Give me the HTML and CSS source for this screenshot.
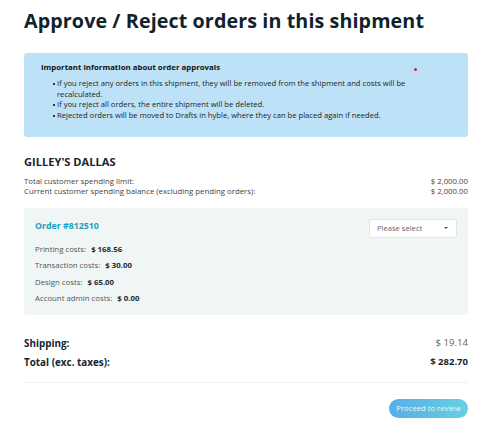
FILE: index.html
```html
<!DOCTYPE html>
<html>
<head>
<meta charset="utf-8">
<link rel="stylesheet" href="styles.css">
</head>
<body>
<div class="page">
  <h1 class="title">Approve / Reject orders in this shipment</h1>
  <div class="info">
    <div class="info-title">Important information about order approvals</div>
    <span class="dot"></span>
    <ul class="info-list">
      <li>If you reject any orders in this shipment, they will be removed from the shipment and costs will be recalculated.</li>
      <li>If you reject all orders, the entire shipment will be deleted.</li>
      <li>Rejected orders will be moved to Drafts in hyble, where they can be placed again if needed.</li>
    </ul>
  </div>
  <div class="customer">GILLEY'S DALLAS</div>
  <div class="row first"><span>Total customer spending limit:</span><span>$ 2,000.00</span></div>
  <div class="row"><span>Current customer spending balance (excluding pending orders):</span><span>$ 2,000.00</span></div>
  <div class="card">
    <div class="card-main">
      <div class="order">Order #812510</div>
      <div class="costs">
        <div class="cost">Printing costs: <b>$ 168.56</b></div>
        <div class="cost">Transaction costs: <b>$ 30.00</b></div>
        <div class="cost">Design costs: <b>$ 65.00</b></div>
        <div class="cost">Account admin costs: <b>$ 0.00</b></div>
      </div>
    </div>
    <div class="select"><span>Please select</span><span class="caret"></span></div>
  </div>
  <div class="sum shipping"><span class="sum-label">Shipping:</span><span class="sum-val">$ 19.14</span></div>
  <div class="sum total"><span class="sum-label">Total (exc. taxes):</span><span class="sum-val">$ 282.70</span></div>
  <div class="actions"><button class="btn">Proceed to review</button></div>
</div>
</body>
</html>
```
FILE: styles.css
```css
* { box-sizing: border-box; }
html, body { margin: 0; padding: 0; background: #fff; }
body { font-family: "Open Sans", "Noto Sans", sans-serif; color: #1d2a30; }
.page { padding: 8px 14px 0 24px; }
.title { margin: 0; font-size: 19.7px; font-weight: 700; line-height: 26px; color: #10232b; letter-spacing: 0.1px; }
.info { position: relative; margin-top: 19px; background: #bde2f7; border-radius: 3px; padding: 9px 16px 0 17px; height: 84px; }
.info-title { font-size: 7.85px; font-weight: 700; line-height: 10px; color: #111; }
.dot { position: absolute; left: 390px; top: 15px; width: 3px; height: 3px; border-radius: 50%; background: #e4202a; }
.info-list { margin: 6px 0 0 0; padding-left: 16px; padding-right: 20px; font-size: 7.65px; line-height: 10.7px; color: #222; list-style: none; }
.info-list li { position: relative; }
.info-list li::before { content: ""; position: absolute; left: -4px; top: 4.6px; width: 2px; height: 2px; background: #333; }
.customer { margin-top: 18px; font-size: 11.1px; font-weight: 700; line-height: 14px; color: #142630; }
.row { display: flex; justify-content: space-between; font-size: 7.8px; line-height: 10px; color: #444; }
.row.first { margin-top: 6.7px; }
.card { display: flex; justify-content: space-between; align-items: flex-start; margin-top: 12.3px; background: #f0f5f6; border-radius: 3px; padding: 11px 11px 0 11px; height: 107px; }
.order { font-size: 8.8px; font-weight: 700; color: #1aa0c0; line-height: 14px; }
.costs { margin-top: 7.75px; }
.cost { font-size: 7.8px; line-height: 16.5px; color: #555; }
.cost b { color: #1d2a30; margin-left: 3px; }
.select { width: 88px; height: 19px; background: #fff; border: 1px solid #e2e6e8; border-radius: 2px; display: flex; align-items: center; justify-content: space-between; padding: 0 8px 0 7px; font-size: 7.6px; color: #666; box-shadow: 0 0 1px rgba(0,0,0,0.05); }
.caret { width: 0; height: 0; border-left: 2px solid transparent; border-right: 2px solid transparent; border-top: 2px solid #555; }
.sum { display: flex; justify-content: space-between; align-items: center; line-height: 14px; }
.shipping { margin-top: 20.7px; }
.sum-label { font-size: 9.9px; font-weight: 700; color: #142630; }
.sum-val { font-size: 9.6px; color: #666; }
.total { margin-top: 5.3px; padding-bottom: 12.7px; border-bottom: 1px solid #eef0f1; }
.total .sum-val { font-weight: 700; color: #142630; font-size: 9.5px; }
.actions { display: flex; justify-content: flex-end; margin-top: 16.3px; }
.btn { width: 79px; height: 19px; border: none; border-radius: 10px; background: linear-gradient(90deg, #58ade8, #66d0df); color: #eaf8fd; font-family: "Open Sans", sans-serif; font-size: 7.7px; padding: 0; }
```
